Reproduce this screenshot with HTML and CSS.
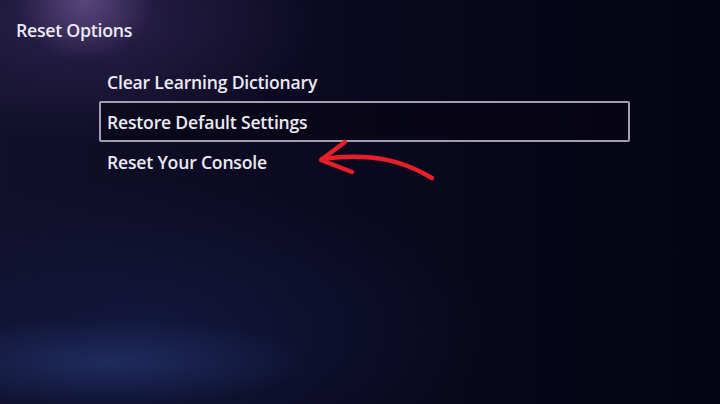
FILE: index.html
```html
<!DOCTYPE html>
<html>
<head>
<meta charset="utf-8">
<link rel="stylesheet" href="styles.css">
</head>
<body>
<div class="screen">
  <h1 class="title">Reset Options</h1>
  <ul class="menu">
    <li class="item">Clear Learning Dictionary</li>
    <li class="item selected">Restore Default Settings</li>
    <li class="item">Reset Your Console</li>
  </ul>
  <svg class="arrow" width="720" height="404" viewBox="0 0 720 404">
    <path d="M432 178 C 405 162, 375 152, 322 159" fill="none" stroke="#e81e28" stroke-width="4.5" stroke-linecap="round"/>
    <path d="M345 142 L 321 160 L 352 172" fill="none" stroke="#e81e28" stroke-width="4.5" stroke-linecap="round" stroke-linejoin="round"/>
  </svg>
</div>
</body>
</html>
```
FILE: styles.css
```css
html, body {
  margin: 0;
  padding: 0;
}
body {
  width: 720px;
  height: 404px;
  overflow: hidden;
  background: #07061a;
}
.screen {
  position: relative;
  width: 720px;
  height: 404px;
  box-sizing: border-box;
  padding: 18px 0 0 16px;
  font-family: "Open Sans", "Noto Sans", sans-serif;
  color: #eceaf4;
  background:
    radial-gradient(ellipse 70px 60px at 85px 0px, rgba(150,120,190,0.45), rgba(150,120,190,0) 100%),
    radial-gradient(ellipse 240px 120px at 90px 20px, rgba(70,50,110,0.5), rgba(70,50,110,0) 100%),
    radial-gradient(ellipse 200px 45px at 110px 362px, rgba(36,56,115,0.65), rgba(36,56,115,0) 100%),
    radial-gradient(ellipse 340px 150px at 150px 330px, rgba(20,26,66,0.75), rgba(20,26,66,0) 100%),
    linear-gradient(90deg, #11102a 0%, #0a0920 45%, #050412 100%);
}
.title {
  margin: 0;
  font-size: 17.8px;
  font-weight: 600;
  line-height: 24px;
  letter-spacing: -0.3px;
}
.menu {
  list-style: none;
  margin: 20px 0 0 83px;
  padding: 0;
  width: 531px;
}
.item {
  box-sizing: border-box;
  height: 39px;
  padding: 0 6px;
  display: flex;
  align-items: center;
  font-size: 17.6px;
  font-weight: 600;
  letter-spacing: -0.2px;
  border: 2px solid transparent;
  border-radius: 2px;
}
.item.selected {
  height: 41px;
  border-color: #a09eb0;
  background: rgba(5,4,16,0.5);
}
.arrow {
  position: absolute;
  left: 0;
  top: 0;
  pointer-events: none;
}
```
